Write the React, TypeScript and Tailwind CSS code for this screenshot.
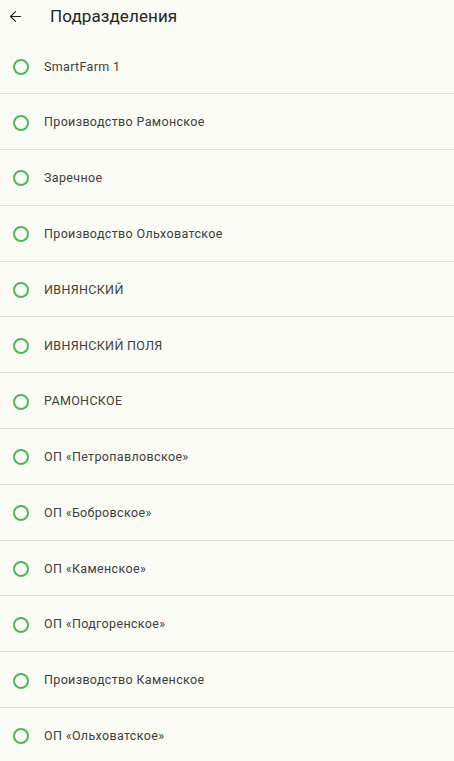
import { ArrowLeft } from "lucide-react";

const items = [
  "SmartFarm 1",
  "Производство Рамонское",
  "Заречное",
  "Производство Ольховатское",
  "ИВНЯНСКИЙ",
  "ИВНЯНСКИЙ ПОЛЯ",
  "РАМОНСКОЕ",
  "ОП «Петропавловское»",
  "ОП «Бобровское»",
  "ОП «Каменское»",
  "ОП «Подгоренское»",
  "Производство Каменское",
  "ОП «Ольховатское»",
];

export default function App() {
  return (
    <div
      className="w-[454px] h-[761px] overflow-hidden bg-[#fbfbf5] text-[#1d1d1b]"
      style={{ fontFamily: "Roboto, 'Noto Sans', sans-serif" }}
    >
      <header className="h-[38.5px] flex items-start pt-[4px]">
        <div className="w-[50px] h-[24px] flex items-center pl-[7px]">
          <ArrowLeft size={17} strokeWidth={1.6} className="text-[#1d1d1b]" />
        </div>
        <h1 className="text-[17px] leading-[24px] tracking-[0.1px] text-[#262624]">
          Подразделения
        </h1>
      </header>
      <ul>
        {items.map((name) => (
          <li
            key={name}
            className="h-[55.8px] flex items-center border-b border-[#dedcd6] pt-[2px]"
          >
            <span className="ml-[13px] w-[16px] h-[16px] rounded-full border-2 border-[#4cb85a]" />
            <span className="ml-[15px] text-[12.5px] tracking-[0.35px] text-[#40403d]">
              {name}
            </span>
          </li>
        ))}
      </ul>
    </div>
  );
}
